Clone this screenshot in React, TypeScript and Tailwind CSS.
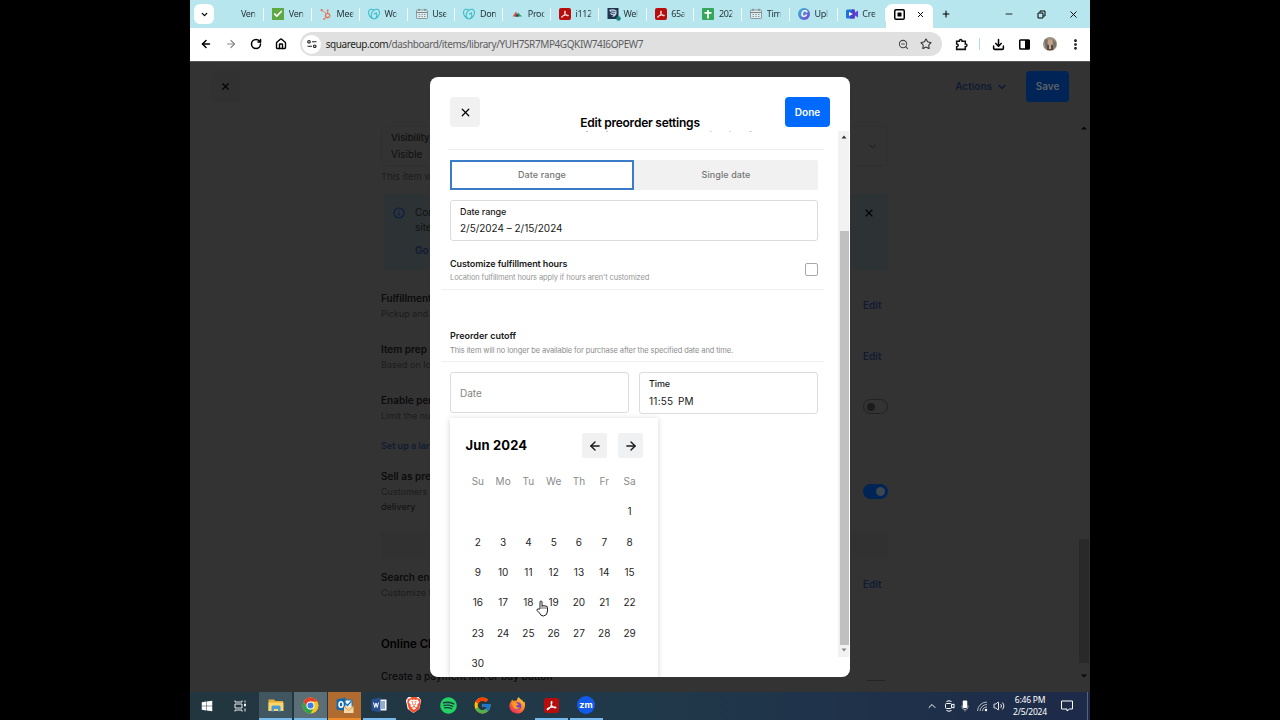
import React from 'react'
import {
  ArrowLeft, ArrowRight, Check, ChevronDown, ChevronUp, Download, House, Info,
  Minus, MoreVertical, Plus, RotateCw, Star, Volume2, X, ZoomOut,
} from 'lucide-react'
import { FaHubspot, FaSpotify, FaWindows } from 'react-icons/fa'
import { FcGoogle } from 'react-icons/fc'
import { SiBrave, SiGodaddy } from 'react-icons/si'

const AcrobatIcon = ({ size = 12 }: { size?: number }) => (
  <svg width={size} height={size} viewBox="0 0 24 24">
    <rect width="24" height="24" rx="4" fill="#b90d0d" />
    <path
      d="M5 18c1-3 6-4 13-3.600c2 .4 1 2-1 1.200C13 14 11 10 11.500 6.500c.3-1.500 1.500-1 1.200.6C12 12 9 17 6.500 18.500c-.8.4-1.700.2-1.500-.5z"
      fill="none"
      stroke="#fff"
      strokeWidth="1.700"
    />
  </svg>
)

const CalendarTabIcon = () => (
  <svg width="12" height="12" viewBox="0 0 24 24" fill="none" stroke="#7b8588" strokeWidth="1.600">
    <rect x="1" y="4" width="22" height="17" rx="1.500" fill="#dcecee" />
    <path d="M1 9h22M6 1.500V6M18 1.500V6" strokeWidth="2.400" />
    <path d="M5 13h14M5 17h14" strokeDasharray="3 2.500" />
  </svg>
)

const tabs = [
  { label: 'Ven', icon: null },
  {
    label: 'Ven',
    icon: (
      <span className="flex h-3 w-3 items-center justify-center bg-[#5fa944] text-white">
        <Check size={10} strokeWidth={4} />
      </span>
    ),
  },
  { label: 'Mee', icon: <FaHubspot size={11} color="#e8714f" /> },
  { label: 'Wo', icon: <SiGodaddy size={12} color="#34bcc4" /> },
  { label: 'Use', icon: <CalendarTabIcon /> },
  { label: 'Don', icon: <SiGodaddy size={12} color="#34bcc4" /> },
  {
    label: 'Proc',
    icon: (
      <svg width="12" height="12" viewBox="0 0 24 24">
        <path d="M3 17l7-10 5 10z" fill="#df5545" />
        <path d="M10 17l4-8 8 8z" fill="#2a9a66" />
        <path d="M8 17l4-5 4 5z" fill="#333c66" />
      </svg>
    ),
  },
  { label: 'i112', icon: <AcrobatIcon /> },
  {
    label: 'Wel',
    icon: (
      <svg width="14" height="14" viewBox="0 0 28 28">
        <rect width="22" height="22" x="1" y="2" fill="#20334f" />
        <path d="M4 6q8-3 15 1v7q-3 7-9 6l3-3q-5-1-8-5l7 1q-6-3-8-7z" fill="#c5d3df" />
        <path d="M8 8l9 1M9 12l7 1" stroke="#20334f" strokeWidth="1.500" />
        <circle cx="23" cy="23" r="4.500" fill="#14847c" />
      </svg>
    ),
  },
  { label: '65a', icon: <AcrobatIcon /> },
  {
    label: '202',
    icon: (
      <svg width="12" height="12" viewBox="0 0 24 24">
        <rect width="24" height="24" rx="2" fill="#36a65a" />
        <path d="M12 4v17M5 9.500h14" stroke="#fff" strokeWidth="3.500" />
      </svg>
    ),
  },
  { label: 'Tim', icon: <CalendarTabIcon /> },
  {
    label: 'Upl',
    icon: (
      <span className="flex h-3 w-3 items-center justify-center rounded-full bg-linear-to-br from-[#18b9cc] to-[#6a35d8] text-[9px] font-bold italic text-white">
        C
      </span>
    ),
  },
  {
    label: 'Cre',
    icon: (
      <svg width="12" height="12" viewBox="0 0 24 24">
        <rect y="3" width="18" height="18" rx="3" fill="#1d73d8" />
        <path d="M12 3h5v18h-9z" fill="#5937c6" />
        <path d="M18 9l6-4v14l-6-4z" fill="#6540d8" />
        <path d="M6 8l8 4-8 4z" fill="#fff" />
      </svg>
    ),
  },
]

function TabStrip() {
  return (
    <div className="flex h-7 shrink-0 items-center bg-[#b7e6ef] text-[#27363a]">
      <div className="ml-1 flex h-5 w-5 items-center justify-center rounded-md bg-white text-black">
        <ChevronDown size={9} strokeWidth={3.5} />
      </div>
      <div className="ml-[2.500px] flex">
        {tabs.map((tab, i) => (
          <div key={i} className="flex h-[13px] w-[47.8px] items-center border-r border-white/80 pl-2">
            <span className="flex w-[15px] shrink-0">{tab.icon}</span>
            <span className="ml-[1.500px] whitespace-nowrap font-['Noto_Sans'] text-[9px] tracking-[-0.35px] mask-r-from-85%">
              {tab.label}
            </span>
          </div>
        ))}
      </div>
      <div className="flex h-[24px] w-[47px] items-center self-end rounded-t-md bg-white pb-[3px] pl-2 text-black">
        <svg width="11" height="11" viewBox="0 0 22 22">
          <rect x="1.500" y="1.500" width="19" height="19" rx="2.500" fill="none" stroke="#000" strokeWidth="3" />
          <rect x="7" y="7" width="8" height="8" rx="1" />
        </svg>
        <X size={9} strokeWidth={2.6} className="ml-[11px]" />
      </div>
      <Plus size={10} strokeWidth={2.6} className="ml-2 text-black" />
      <div className="ml-auto flex items-center gap-[22.500px] pr-[11px] text-black">
        <Minus size={10} strokeWidth={2} />
        <svg width="9" height="9" viewBox="0 0 9 9" fill="none" stroke="currentColor">
          <path d="M1 3h5v5H1zM3 2.500V1h5v5H6.500" />
        </svg>
        <X size={11} strokeWidth={2} />
      </div>
    </div>
  )
}

function Toolbar() {
  return (
    <div className="flex h-[33px] shrink-0 items-center bg-white pb-px text-black">
      <div className="ml-[9.500px] flex gap-[13.300px]">
        <ArrowLeft size={12} strokeWidth={3} />
        <ArrowRight size={12} strokeWidth={2.4} className="text-[#8b8b8b]" />
        <RotateCw size={12} strokeWidth={3} />
        <House size={12} strokeWidth={2.8} />
      </div>
      <div className="ml-[12.800px] flex h-6 w-[642px] items-center rounded-full bg-[#e0e0e0] pl-[2px]">
        <div className="flex h-[19px] w-[19px] items-center justify-center rounded-full bg-white">
          <svg width="10" height="10" viewBox="0 0 20 20" fill="none" stroke="#222" strokeWidth="2.400">
            <circle cx="4" cy="5.500" r="2.500" />
            <path d="M10 5.500h9M1 14.500h9" />
            <circle cx="15.500" cy="14.500" r="2.500" />
          </svg>
        </div>
        <div className="ml-[4.500px] whitespace-nowrap font-['Noto_Sans'] text-[10px] tracking-[-0.41px] text-[#5b5d5f]">
          <span className="text-[#1d1f20]">squareup.com</span>/dashboard/items/library/YUH7SR7MP4GQKIW74I6OPEW7
        </div>
        <ZoomOut size={11} strokeWidth={2.2} className="ml-auto text-[#444]" />
        <Star size={12} strokeWidth={2.2} className="ml-[11px] mr-[10.500px] text-[#333]" />
      </div>
      <svg width="13" height="13" viewBox="0 0 24 24" fill="none" stroke="#111" strokeWidth="2.800" className="ml-[13px]">
        <path d="M3 6h5c-.5-4 5.500-4 5 0h6v5c4-.5 4 5.500 0 5v5H3v-5c4 0 4-5 0-5z" />
      </svg>
      <div className="ml-[11px] h-3 w-px bg-[#a9dfe6]" />
      <Download size={13} strokeWidth={2.8} className="ml-3" />
      <svg width="11" height="11" viewBox="0 0 22 22" className="ml-[14px]">
        <rect x="1.500" y="2" width="19" height="18" rx="1.500" fill="#fff" stroke="#000" strokeWidth="3" />
        <path d="M12 2h9v18h-9z" />
      </svg>
      <svg width="14" height="14" viewBox="0 0 28 28" className="ml-[13px]">
        <circle cx="14" cy="14" r="14" fill="#9c9182" />
        <path d="M3 5h7v18H5zM20 5l6 6v8l-5 3z" fill="#75746a" />
        <circle cx="14" cy="10" r="5" fill="#c99f83" />
        <path d="M8 16h12l1 10H8z" fill="#594a42" />
        <path d="M12 15h4v9h-4z" fill="#c7ad98" />
      </svg>
      <MoreVertical size={13} strokeWidth={3} className="ml-[12px]" />
    </div>
  )
}

function SettingRow({ title, text, action, className }: {
  title: string
  text: React.ReactNode
  action?: React.ReactNode
  className: string
}) {
  return (
    <div className={`flex justify-between ${className}`}>
      <div>
        <div className="text-[10px] leading-[15px] font-semibold text-[#0b0b0b]">{title}</div>
        <div className="text-[9px] leading-[15px] text-[#1c1c1c]">{text}</div>
      </div>
      {action}
    </div>
  )
}

const EditLink = () => <div className="mr-[6.500px] pt-[7px] text-[10px] leading-[15px] font-semibold text-[#101b33]">Edit</div>

function DashboardPage() {
  return (
    <div className="h-full overflow-hidden border-t border-[#555] bg-[#333]">
      <div className="flex h-[64px] items-start pt-[9px]">
        <div className="ml-[21px] flex h-[31px] w-[29px] items-center justify-center rounded bg-[#313131]">
          <X size={11} strokeWidth={2.4} className="text-black" />
        </div>
        <div className="ml-auto flex h-[31px] items-center gap-[4px] text-[10px] font-semibold text-[#101b33]">
          Actions
          <ChevronDown size={12} strokeWidth={3} />
        </div>
        <div className="mr-[21px] ml-[18px] flex h-[31px] w-[43px] items-center justify-center rounded bg-[#002456] text-[10px] font-semibold text-[#5d6267]">
          Save
        </div>
      </div>

      <div className="flex">
        <div className="ml-[191px] w-[507px]">
          <div className="flex h-10 items-center justify-between rounded border border-[#303030] px-[9px]">
            <div className="text-[10px] leading-4 text-[#0f0f0f]">
              <div className="text-[9.500px] font-medium">Visibility</div>
              <div>Visible</div>
            </div>
            <ChevronDown size={11} strokeWidth={2} className="text-[#151515]" />
          </div>
          <div className="mt-[3px] text-[9.500px] leading-4 text-[#1c1c1c]">This item w</div>
          <div className="mt-[9px] ml-[3px] flex h-[76px] rounded bg-[#2d3235] pt-[11px]">
            <Info size={12} strokeWidth={2.4} className="ml-[9px] mt-[2px] text-[#0b1f46]" />
            <div className="ml-[10px] text-[10px] leading-[15px] text-[#111]">
              <div>Con</div>
              <div>site</div>
              <div className="mt-2 font-semibold text-[#101b33]">Go</div>
            </div>
            <X size={12} strokeWidth={2.2} className="ml-auto mt-[2px] mr-[13px] text-black" />
          </div>

          <SettingRow className="mt-[21px]" title="Fulfillment" text="Pickup and f" action={<EditLink />} />
          <SettingRow className="mt-[21px]" title="Item prep" text="Based on loc" action={<EditLink />} />
          <SettingRow
            className="mt-[21px]"
            title="Enable per"
            text="Limit the nun"
            action={
              <div className="mt-[6px] flex h-[15px] w-[25px] items-center rounded-full border border-[#222] pl-[3px]">
                <div className="h-2 w-2 rounded-full bg-[#1c1c1c]" />
              </div>
            }
          />
          <div className="mt-[15px] text-[9px] leading-[15px] font-semibold text-[#101b33]">Set up a lar</div>
          <SettingRow
            className="mt-4"
            title="Sell as pre"
            text={<><div>Customers c</div><div className="font-medium text-[#141414]">delivery</div></>}
            action={
              <div className="mt-[15px] flex h-[15px] w-[25px] items-center justify-end rounded-full bg-[#002456] pr-[3px]">
                <div className="h-[9px] w-[9px] rounded-full bg-[#3c4651]" />
              </div>
            }
          />
          <div className="mt-[18px] h-[27px] bg-[#313131]" />
          <SettingRow className="mt-[11px]" title="Search en" text="Customize h" action={<EditLink />} />
          <div className="mt-[34px] text-[11.500px] leading-5 font-semibold text-black">Online Cl</div>
          <div className="mt-[13px] flex justify-between text-[10px] leading-[18px] font-medium tracking-[0.03px] text-[#090909]">
            Create a payment link or buy button
            <div className="mt-[13px] mr-[3px] h-px w-[18px] bg-[#242424]" />
          </div>
        </div>
        <div className="ml-auto flex h-[560px] w-[12px] flex-col items-center text-[#090909]">
          <svg width="6" height="4" viewBox="0 0 6 4"><path d="M0 3.500h6L3 .5z" fill="currentColor" /></svg>
          <div className="mt-[409px] h-[124px] w-[10px] bg-[#292929]" />
          <svg width="6" height="4" viewBox="0 0 6 4" className="mt-[11px]"><path d="M0 .5h6L3 3.500z" fill="currentColor" /></svg>
        </div>
      </div>
    </div>
  )
}

const weekdays = ['Su', 'Mo', 'Tu', 'We', 'Th', 'Fr', 'Sa']
const days = Array.from({ length: 30 }, (_, i) => i + 1)

function Calendar() {
  return (
    <div className="absolute top-[341px] left-5 h-[259px] w-[208px] overflow-hidden bg-white shadow-[0_1px_6px_rgba(0,0,0,0.18)]">
      <div className="mt-[15px] flex items-center pr-[15px] pl-[15.500px]">
        <div className="text-[13px] font-bold tracking-[0.15px] whitespace-nowrap text-black">Jun 2024</div>
        <div className="ml-auto flex gap-[11px]">
          <button className="flex h-[25px] w-[25px] items-center justify-center rounded-xs bg-[#f1f1f1]">
            <ArrowLeft size={14} strokeWidth={2.4} />
          </button>
          <button className="flex h-[25px] w-[25px] items-center justify-center rounded-xs bg-[#f0f1f3]">
            <ArrowRight size={14} strokeWidth={2.4} />
          </button>
        </div>
      </div>
      <div className="mt-[8px] ml-[15.200px] grid w-[177px] grid-cols-7 text-center text-[10px] leading-[30.350px] text-[#262626]">
        {weekdays.map(day => <div key={day} className="text-[#8a8a8a]">{day}</div>)}
        {days.map(day => <div key={day} className="nth-[8]:col-start-7">{day}</div>)}
      </div>
    </div>
  )
}

function PreorderModal() {
  return (
    <div className="absolute top-[16px] left-[240px] h-[600px] w-[420px] overflow-hidden rounded-lg bg-white text-[#1a1a1a]">
      <div className="flex h-[54px] px-5 pt-5">
        <button className="flex h-[30px] w-[30px] items-center justify-center rounded-sm bg-[#f1f1f1]">
          <X size={13} strokeWidth={2.2} className="text-black" />
        </button>
        <div className="flex-1 pt-[16px] pl-[15px] text-center text-[12px] leading-[20px] font-semibold tracking-[-0.24px] whitespace-nowrap text-black">
          Edit preorder settings
        </div>
        <button className="h-[30px] w-[45px] rounded-sm bg-[#006aff] text-[10px] font-semibold text-white">Done</button>
      </div>

      <div className="flex h-[526px]">
        <div className="w-[408px] pl-5">
          <div className="-ml-0.5 h-[19px] w-[376px] border-b border-[#eeeeee]">
            {/* bottom edge of the line scrolled under the header */}
            <svg width="376" height="1" viewBox="0 0 376 1" className="block">
              <path d="M138 .5h2M158 .5h2M262 .5h1.500M281 .5h1.500M301.500 .5h2" stroke="#c4c4c4" />
            </svg>
          </div>
          <div className="mt-[10px] flex h-[30px] w-[368px] text-[9px] font-medium tracking-[0.08px] text-[#757575]">
            <div className="flex w-[184px] items-center justify-center border-2 border-[#3a7cc8]">Date range</div>
            <div className="flex flex-1 items-center justify-center rounded-r-xs bg-[#f1f1f1]">Single date</div>
          </div>
          <div className="mt-[10px] h-[41px] w-[368px] rounded-[3px] border border-[#dcdcdc] px-[9px] pt-[3px]">
            <div className="text-[9px] leading-4 font-medium tracking-[-0.08px]">Date range</div>
            <div className="text-[10px] leading-[16px] tracking-[-0.03px]">2/5/2024 – 2/15/2024</div>
          </div>

          <div className="mt-[15px] -ml-2 flex h-[34px] w-[382px] justify-between border-b border-[#f0f0f0] pr-[6px] pl-2">
            <div>
              <div className="text-[9px] leading-[15px] font-semibold tracking-[-0.1px]">Customize fulfillment hours</div>
              <div className="text-[7.500px] leading-[14px] tracking-[-0.115px] text-[#969696]">Location fulfillment hours apply if hours aren't customized</div>
            </div>
            <div className="mt-[7px] h-[13px] w-[13px] rounded-xs border border-[#a9a9a9]" />
          </div>

          <div className="mt-[38px] -ml-2 h-[34px] w-[382px] border-b border-[#f0f0f0] pl-2">
            <div className="text-[9px] leading-[15px] font-semibold">Preorder cutoff</div>
            <div className="text-[7.500px] leading-[15px] tracking-[-0.105px] text-[#8c8c8c]">This item will no longer be available for purchase after the specified date and time.</div>
          </div>

          <div className="mt-[10px] flex w-[368px] gap-[10px]">
            <div className="flex h-[41px] flex-1 items-center rounded-[3px] border border-[#dcdcdc] px-[9px] pt-px text-[10px] text-[#858585]">Date</div>
            <div className="h-[42px] flex-1 rounded-[3px] border border-[#dcdcdc] px-[9px] pt-[3px]">
              <div className="text-[9px] leading-4 font-medium tracking-[-0.1px]">Time</div>
              <div className="text-[10px] leading-[18px] tracking-[0.25px] [word-spacing:1.5px]">11:55 PM</div>
            </div>
          </div>
        </div>

        <div className="flex h-[526px] w-[11px] flex-col items-center bg-[#f2f2f2]">
          <svg width="6" height="4" viewBox="0 0 6 4" className="mt-1 shrink-0"><path d="M.5 3.500h5L3 .5z" fill="#333" /></svg>
          <div className="mt-[92px] ml-[2px] h-[414px] w-[9px] bg-[#c0c0c0]" />
          <svg width="6" height="4" viewBox="0 0 6 4" className="mt-[3px] shrink-0"><path d="M.5.5h5L3 3.500z" fill="#888" /></svg>
        </div>
      </div>
      <Calendar />
    </div>
  )
}

const apps = [
  {
    id: 'explorer',
    tile: 'bg-[#415760] border-[#76b9ed]',
    icon: (
      <svg width="16" height="16" viewBox="0 0 32 32">
        <path d="M1 5h11l3 3h15v20H1z" fill="#e8ae35" />
        <path d="M1 11h30v17H1z" fill="#fbd66d" />
        <path d="M7 20q0-3 3-3h12q3 0 3 3v9h-5v-5h-8v5H7z" fill="#4b9bd5" />
      </svg>
    ),
  },
  {
    id: 'chrome',
    tile: 'bg-[#5b6e75] border-[#76b9ed]',
    icon: (
      <svg width="17" height="17" viewBox="0 0 34 34">
        <circle cx="17" cy="17" r="16" fill="#f9c522" />
        <path d="M3.100 9A16 16 0 0 1 30.900 9H17a8 8 0 0 0-6.900 12z" fill="#e4402f" />
        <path d="M3.100 9A16 16 0 0 0 17 33l6.900-12A8 8 0 0 1 10.100 21z" fill="#2fa34c" />
        <circle cx="17" cy="17" r="8" fill="#fff" />
        <circle cx="17" cy="17" r="6" fill="#3d7de8" />
      </svg>
    ),
  },
  {
    id: 'outlook',
    tile: 'bg-[#b06c30] border-[#ef8a2b]',
    icon: (
      <svg width="18" height="18" viewBox="0 0 36 36">
        <path d="M15 8h17v17H15z" fill="#f1f6fa" stroke="#1973b8" strokeWidth="2" />
        <path d="M18 14l5 5 8-9" fill="none" stroke="#1973b8" strokeWidth="2.500" />
        <path d="M1 7l18-4v27L1 27z" fill="#1468ac" />
        <ellipse cx="10" cy="17" rx="4" ry="5.500" fill="none" stroke="#fff" strokeWidth="3" />
        <path d="M16 21h19v13H16z" fill="#f7d8a4" />
        <path d="M16 21l9.500 8 9.500-8" fill="none" stroke="#d48a35" strokeWidth="1.500" />
      </svg>
    ),
  },
  {
    id: 'word',
    tile: 'border-[#76b9ed]',
    icon: (
      <svg width="16" height="16" viewBox="0 0 32 32">
        <path d="M16 5h15v22H16z" fill="#f5f8fc" />
        <path d="M20 10h8M20 14h8M20 18h8M20 22h8" stroke="#35619f" strokeWidth="2" />
        <path d="M1 5l18-4v30L1 27z" fill="#294f91" />
        <path d="M5 11l2.500 10L10 12l2.500 9L15 11" fill="none" stroke="#fff" strokeWidth="2" />
      </svg>
    ),
  },
  { id: 'brave', tile: 'border-transparent', icon: <SiBrave size={16} color="#f5512b" className="bg-white [clip-path:polygon(18%_0,82%_0,98%_20%,86%_75%,50%_100%,14%_75%,2%_20%)]" /> },
  { id: 'spotify', tile: 'border-transparent', icon: <FaSpotify size={17} color="#24d263" /> },
  { id: 'google', tile: 'border-transparent', icon: <FcGoogle size={19} /> },
  {
    id: 'firefox',
    tile: 'border-transparent',
    icon: (
      <svg width="17" height="17" viewBox="0 0 34 34">
        <defs>
          <linearGradient id="fox" x1="1" y1="0" x2="0.300" y2="1">
            <stop offset="0" stopColor="#ffe04b" />
            <stop offset="0.500" stopColor="#ff8a1f" />
            <stop offset="1" stopColor="#ee2b5d" />
          </linearGradient>
        </defs>
        <path d="M5 8l1-3 4 3c2-1 4-1 6-1 0-3 1-5 4-7 0 4 8 6 10 11l1-2c4 13-4 24-14 24S0 26 1 17c0-4 2-7 4-9z" fill="url(#fox)" />
        <circle cx="17" cy="18" r="7.500" fill="#7842c8" />
        <path d="M5 12c5-3 8-2 11 1 3 0 4 2 2 3l-4 2c1 3 5 4 8 2-2 6-12 6-14-1-1-3-1-5-3-7z" fill="#ff9a24" />
      </svg>
    ),
  },
  { id: 'acrobat', tile: 'border-[#76b9ed]', icon: <AcrobatIcon size={15} /> },
  {
    id: 'zoom',
    tile: 'border-[#76b9ed]',
    icon: (
      <span className="flex h-[18px] w-[18px] items-center justify-center rounded-full bg-[#145ae8] pb-px text-[9px] font-bold text-white">zm</span>
    ),
  },
]

function Taskbar() {
  return (
    <div className="flex h-7 shrink-0 items-center bg-linear-to-r from-[#22363f] via-[#20394a] to-[#1d2a49] text-white">
      <FaWindows size={12} className="ml-[11px]" />
      <svg width="13" height="12" viewBox="0 0 26 24" className="ml-[21px]" fill="none" stroke="#fff" strokeWidth="1.800">
        <path d="M2 1v3h14V1M2 8h14v8H2zM2 23v-3h14v3M22 1v4M22 17v6" />
        <path d="M21 8h2v4h-2z" fill="#fff" />
      </svg>
      <div className="ml-[12px] flex h-full gap-[1.500px]">
        {apps.map(app => (
          <div key={app.id} className={`flex h-full w-[33px] items-center justify-center border-b-2 ${app.tile}`}>
            {app.icon}
          </div>
        ))}
      </div>
      <div className="ml-auto flex items-center">
        <ChevronUp size={12} strokeWidth={2} />
        <svg width="11" height="12" viewBox="0 0 22 24" className="ml-[6px]" fill="none" stroke="#fff" strokeWidth="2">
          <rect x="3" y="7" width="12" height="10" rx="2" />
          <path d="M15 10l5-2v8l-5-2M5 3q5-3 10 0M5 21q5 3 10 0" />
        </svg>
        <svg width="8" height="12" viewBox="0 0 16 24" className="ml-[6px]">
          <rect x="3.500" y="1" width="9" height="15" rx="2" fill="#fff" />
          <path d="M2 11v3q0 5 6 5t6-5v-3M8 19v4" fill="none" stroke="#ccc" strokeWidth="1.500" />
        </svg>
        <svg width="11" height="11" viewBox="0 0 22 22" className="ml-[8px]" fill="none" stroke="#d5dce3" strokeWidth="1.600">
          <path d="M1 20A19 19 0 0 1 20 2M6 20A14 14 0 0 1 20 7M11 20a9 9 0 0 1 9-8" />
          <circle cx="18" cy="18" r="2.500" fill="#fff" stroke="none" />
        </svg>
        <Volume2 size={12} strokeWidth={1.8} className="ml-[5px]" />
        <div className="ml-[5px] w-[40px] text-center font-['Noto_Sans'] text-[8.500px] leading-[12.500px] tracking-[-0.2px] whitespace-nowrap">
          <div>6:46 PM</div>
          <div>2/5/2024</div>
        </div>
        <svg width="12" height="12" viewBox="0 0 24 24" className="ml-[11px]" fill="none" stroke="#fff" strokeWidth="2">
          <path d="M1 2h22v16h-6l-5 4v-4H1z" />
        </svg>
        <div className="ml-[14px] mr-[2px] h-7 w-px bg-[#55627c]" />
      </div>
    </div>
  )
}

function HandCursor() {
  return (
    <svg width="13" height="17" viewBox="0 0 13 17" className="absolute top-[539px] left-[346px]">
      <path
        d="M4 9V2Q4 1 5 1t1 1v4q1-1 2 0 1-.8 2 .3 1.500-.5 1.500 1.200V11q0 4.500-4 5Q4.500 16 3.500 13L1 10.500q-.3-1.500 1-1.500z"
        fill="#fff"
        stroke="#222"
        strokeWidth="1"
      />
      <path d="M6 6v3M8 6.500V9M10 7v2" stroke="#222" strokeWidth="0.700" />
    </svg>
  )
}

export default function App() {
  return (
    <div className="flex h-[720px] w-[1280px] justify-center overflow-hidden bg-black font-[Inter,sans-serif]">
      <div className="flex w-[900px] flex-col">
        <TabStrip />
        <Toolbar />
        <div className="relative h-[631px] shrink-0">
          <DashboardPage />
          <PreorderModal />
          <HandCursor />
        </div>
        <Taskbar />
      </div>
    </div>
  )
}
